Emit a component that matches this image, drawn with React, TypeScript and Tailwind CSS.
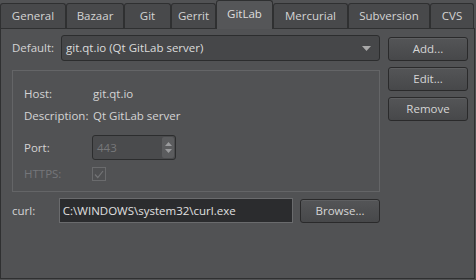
import React from "react";

const tabs = [
  { label: "General", w: 66 },
  { label: "Bazaar", w: 58 },
  { label: "Git", w: 47 },
  { label: "Gerrit", w: 45 },
  { label: "GitLab", w: 57, active: true },
  { label: "Mercurial", w: 75 },
  { label: "Subversion", w: 82 },
  { label: "CVS", w: 44 },
];

function Button({ label }: { label: string }) {
  return (
    <div className="flex h-[24px] w-[80px] items-center justify-center rounded-[3px] border border-[#2a2a2b] bg-gradient-to-b from-[#545557] to-[#47484a] text-[#d6d6d6] shadow-[inset_0_1px_0_#5e5f61]">
      {label}
    </div>
  );
}

export default function App() {
  return (
    <div
      className="h-[280px] w-[476px] overflow-hidden bg-[#515254] text-[11.5px] text-[#d4d4d4]"
      style={{ fontFamily: '"Open Sans", "Noto Sans", sans-serif' }}
    >
      {/* tab bar */}
      <div className="flex h-[28px] items-end">
        {tabs.map((t) =>
          t.active ? (
            <div
              key={t.label}
              className="relative z-10 -mb-px flex h-[29px] items-center justify-center rounded-t-[3px] border border-b-0 border-[#2f3031] bg-[#555658] pb-[2px] text-[#dedede]"
              style={{ width: t.w }}
            >
              {t.label}
            </div>
          ) : (
            <div
              key={t.label}
              className="flex h-[25px] items-center justify-center rounded-t-[3px] border border-b-0 border-[#2f3031] bg-[#48494b]"
              style={{ width: t.w }}
            >
              {t.label}
            </div>
          )
        )}
      </div>

      {/* page */}
      <div className="flex h-[251px] w-[475px] gap-[8px] border border-[#2f3031] pl-[11px] pt-[6px]">
        <div className="flex w-[368px] flex-col">
          <div className="flex h-[26px] items-center">
            <span className="w-[49px]">Default:</span>
            <div className="flex h-[26px] flex-1 items-center justify-between rounded-[3px] border border-[#2c2d2e] bg-[#464749] pl-[4px] pr-[8px] text-[#dcdcdc]">
              <span>git.qt.io (Qt GitLab server)</span>
              <svg width="9" height="5" viewBox="0 0 9 5">
                <path d="M0 0H9L4.5 5Z" fill="#a9a9a9" />
              </svg>
            </div>
          </div>

          <div className="mt-[9px] flex h-[122px] flex-col border border-[#646567] pl-[11px] pt-[13px]">
            <div className="flex h-[20px] items-center">
              <span className="w-[69px]">Host:</span>
              <span>git.qt.io</span>
            </div>
            <div className="mt-[2px] flex h-[20px] items-center">
              <span className="w-[69px]">Description:</span>
              <span>Qt GitLab server</span>
            </div>
            <div className="mt-[9px] flex h-[25px] items-center">
              <span className="w-[68px]">Port:</span>
              <div className="flex h-[25px] w-[84px] items-center rounded-[3px] border border-[#2c2d2e] bg-[#4a4b4d]">
                <span className="flex-1 pl-[4px] text-[#77787a]">443</span>
                <div className="mr-[1px] flex h-[21px] w-[12px] flex-col items-center justify-center gap-[3px] rounded-[2px] bg-[#5b5c5e]">
                  <svg width="7" height="4" viewBox="0 0 7 4">
                    <path d="M0 4H7L3.5 0Z" fill="#9a9b9d" />
                  </svg>
                  <svg width="7" height="4" viewBox="0 0 7 4">
                    <path d="M0 0H7L3.5 4Z" fill="#9a9b9d" />
                  </svg>
                </div>
              </div>
            </div>
            <div className="mt-[7px] flex h-[14px] items-center">
              <span className="w-[68px] text-[#75767a]">HTTPS:</span>
              <div className="flex h-[14px] w-[14px] items-center justify-center border border-[#6a6b6d] bg-[#4f5052]">
                <svg width="10" height="9" viewBox="0 0 10 9">
                  <path d="M1 4.5L3.8 7.5L9 1" stroke="#737476" strokeWidth="1.2" fill="none" />
                </svg>
              </div>
            </div>
          </div>

          <div className="mt-[6px] flex h-[25px] items-center">
            <span className="w-[47px]">curl:</span>
            <div className="flex h-[25px] w-[235px] items-center border border-[#6a6b6d] bg-[#2b2c2e] pl-[3px] text-[#e0e0e0]">
              C:\WINDOWS\system32\curl.exe
            </div>
            <div className="ml-[7px]">
              <Button label="Browse..." />
            </div>
          </div>
        </div>

        <div className="flex flex-col gap-[6px] pt-[2px]">
          <Button label="Add..." />
          <Button label="Edit..." />
          <Button label="Remove" />
        </div>
      </div>
    </div>
  );
}
